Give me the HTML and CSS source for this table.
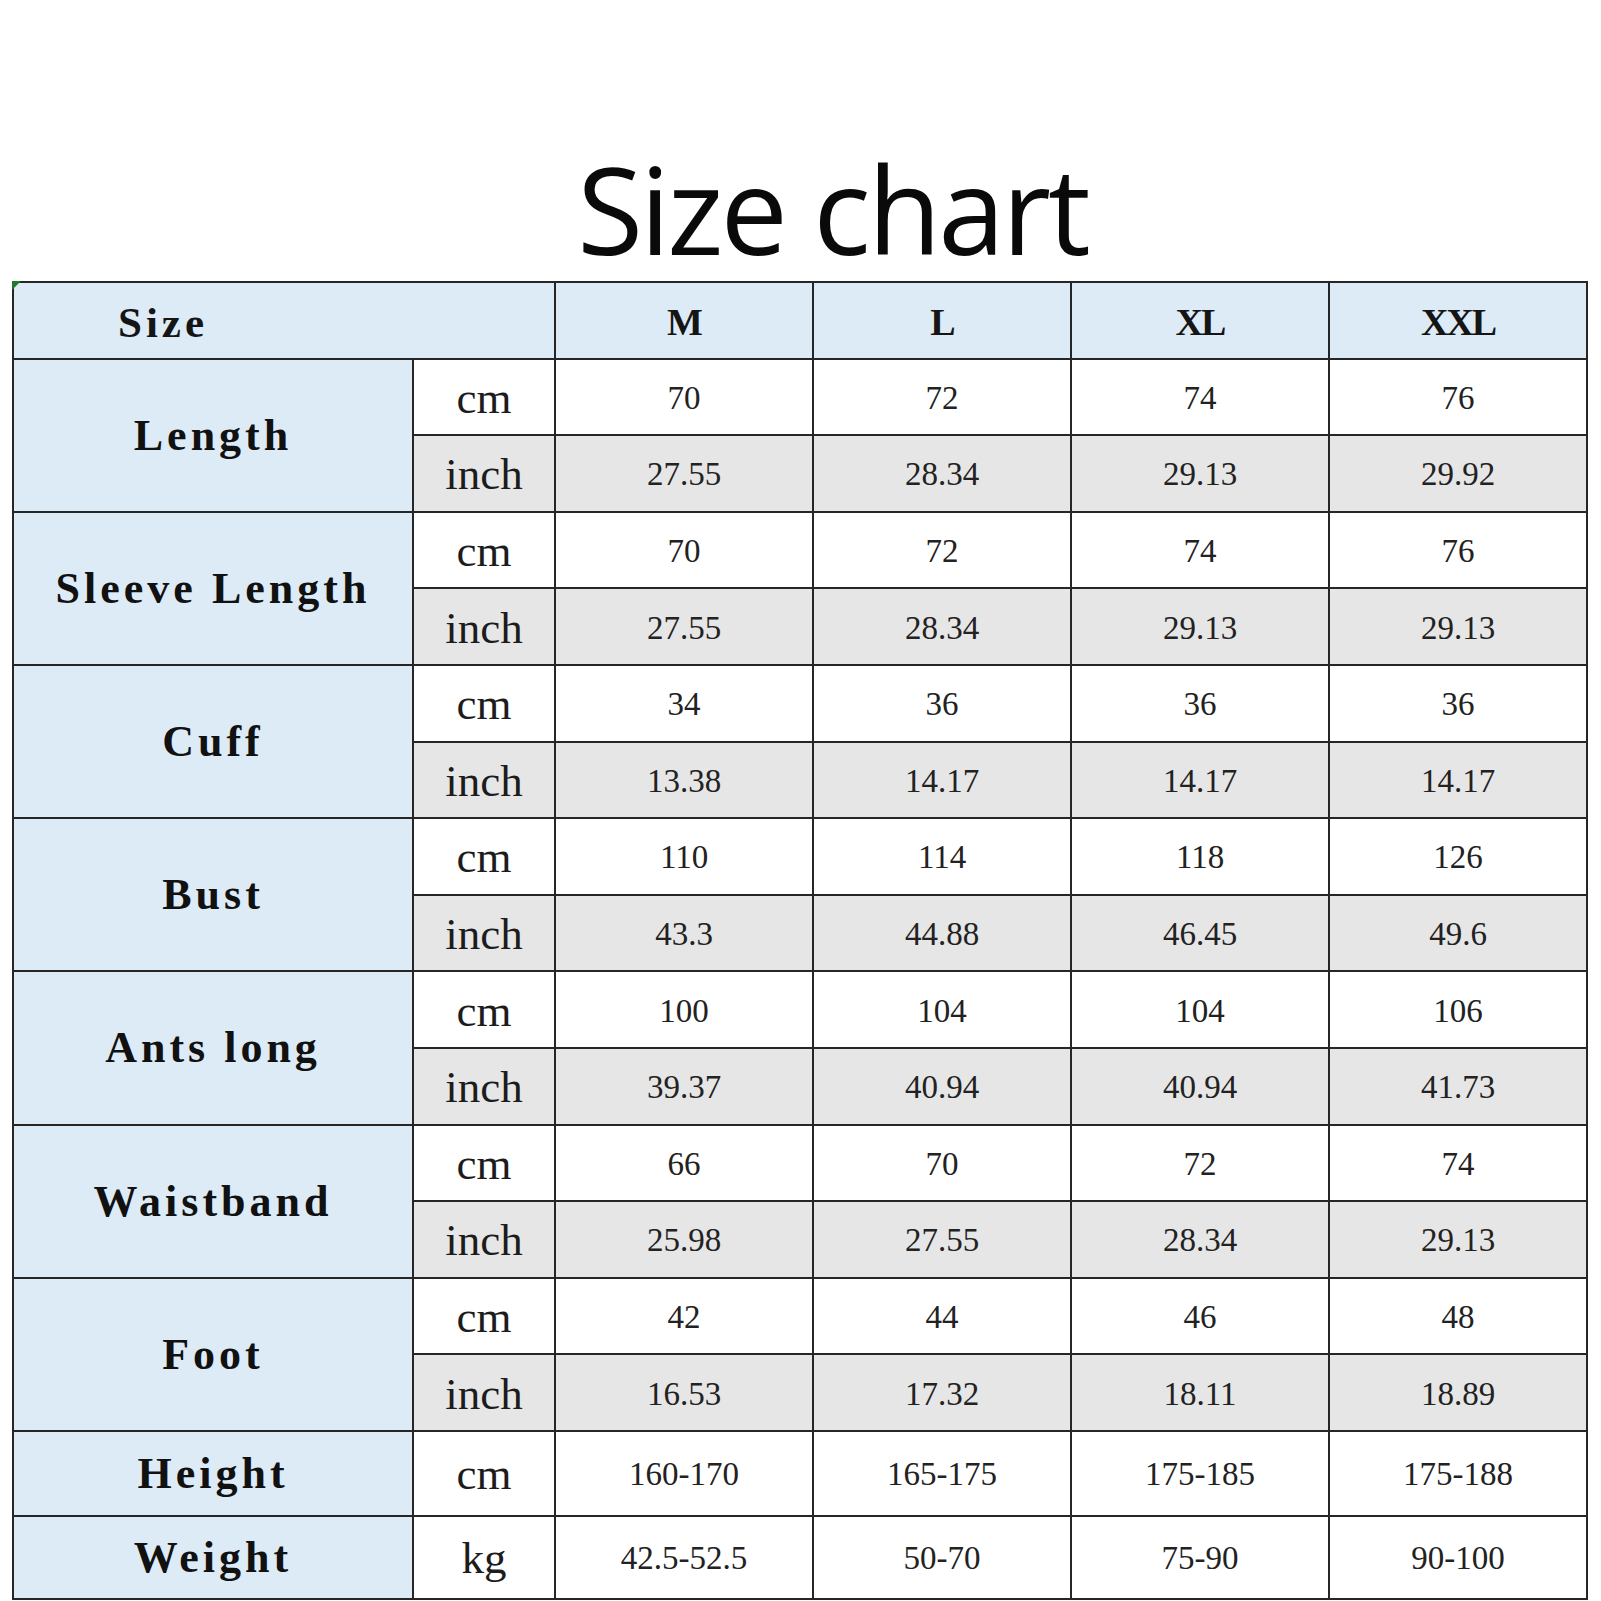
FILE: index.html
```html
<!DOCTYPE html>
<html lang="en">
<head>
<meta charset="utf-8">
<title>Size chart</title>
<link rel="stylesheet" href="styles.css">
</head>
<body>
<div class="page">
  <h1 class="title">Size chart</h1>
  <div class="chart">
    <span class="marker"></span>
    <table class="sizes">
      <colgroup>
        <col class="c-label"><col class="c-unit"><col class="c-val"><col class="c-val"><col class="c-val"><col class="c-val">
      </colgroup>
      <thead>
        <tr class="row head">
          <th colspan="2" class="size-head">Size</th>
          <th>M</th><th>L</th><th>XL</th><th>XXL</th>
        </tr>
      </thead>
      <tbody>
        <tr class="row"><th rowspan="2" class="label">Length</th><td class="unit">cm</td><td>70</td><td>72</td><td>74</td><td>76</td></tr>
        <tr class="row alt"><td class="unit">inch</td><td>27.55</td><td>28.34</td><td>29.13</td><td>29.92</td></tr>
        <tr class="row"><th rowspan="2" class="label">Sleeve Length</th><td class="unit">cm</td><td>70</td><td>72</td><td>74</td><td>76</td></tr>
        <tr class="row alt"><td class="unit">inch</td><td>27.55</td><td>28.34</td><td>29.13</td><td>29.13</td></tr>
        <tr class="row"><th rowspan="2" class="label">Cuff</th><td class="unit">cm</td><td>34</td><td>36</td><td>36</td><td>36</td></tr>
        <tr class="row alt"><td class="unit">inch</td><td>13.38</td><td>14.17</td><td>14.17</td><td>14.17</td></tr>
        <tr class="row"><th rowspan="2" class="label">Bust</th><td class="unit">cm</td><td>110</td><td>114</td><td>118</td><td>126</td></tr>
        <tr class="row alt"><td class="unit">inch</td><td>43.3</td><td>44.88</td><td>46.45</td><td>49.6</td></tr>
        <tr class="row"><th rowspan="2" class="label">Ants long</th><td class="unit">cm</td><td>100</td><td>104</td><td>104</td><td>106</td></tr>
        <tr class="row alt"><td class="unit">inch</td><td>39.37</td><td>40.94</td><td>40.94</td><td>41.73</td></tr>
        <tr class="row"><th rowspan="2" class="label">Waistband</th><td class="unit">cm</td><td>66</td><td>70</td><td>72</td><td>74</td></tr>
        <tr class="row alt"><td class="unit">inch</td><td>25.98</td><td>27.55</td><td>28.34</td><td>29.13</td></tr>
        <tr class="row"><th rowspan="2" class="label">Foot</th><td class="unit">cm</td><td>42</td><td>44</td><td>46</td><td>48</td></tr>
        <tr class="row alt"><td class="unit">inch</td><td>16.53</td><td>17.32</td><td>18.11</td><td>18.89</td></tr>
        <tr class="row tall-a"><th class="label">Height</th><td class="unit">cm</td><td>160-170</td><td>165-175</td><td>175-185</td><td>175-188</td></tr>
        <tr class="row tall-b"><th class="label">Weight</th><td class="unit">kg</td><td>42.5-52.5</td><td>50-70</td><td>75-90</td><td>90-100</td></tr>
      </tbody>
    </table>
  </div>
</div>
</body>
</html>
```

FILE: styles.css
```css
html, body {
  margin: 0;
  padding: 0;
  background: #ffffff;
}

.page {
  width: 1601px;
  height: 1601px;
  overflow: hidden;
}

.title {
  margin: 0;
  padding: 148px 0 0 64px;
  height: 122px;
  line-height: 122px;
  font-family: "Open Sans", "Noto Sans", sans-serif;
  font-weight: 400;
  font-size: 120px;
  letter-spacing: -3px;
  text-align: center;
  color: #0a0a0a;
}

.chart {
  position: relative;
  margin: 11px 0 0 12px;
  width: 1576px;
}

.marker {
  position: absolute;
  left: 0;
  top: 0;
  width: 0;
  height: 0;
  border-top: 9px solid #1f7a2a;
  border-right: 9px solid transparent;
  z-index: 2;
}

.sizes {
  border-collapse: collapse;
  table-layout: fixed;
  width: 1576px;
  font-family: "Liberation Serif", "Times New Roman", serif;
  color: #222222;
}

.c-label { width: 400px; }
.c-unit { width: 142px; }
.c-val { width: 258px; }

.sizes th,
.sizes td {
  border: 2px solid #262626;
  padding: 0;
  text-align: center;
  vertical-align: middle;
}

.row { height: 76.6px; }
.tall-a { height: 85px; }
.tall-b { height: 83px; }

.head th {
  background: #ddebf7;
  font-weight: 700;
  font-size: 38px;
  letter-spacing: -2px;
  color: #151515;
  padding-top: 4px;
}

.head th.size-head {
  text-align: left;
  padding-left: 104px;
  font-size: 43px;
  letter-spacing: 4px;
}

.label {
  background: #ddebf7;
  font-weight: 700;
  font-size: 44px;
  letter-spacing: 4px;
  color: #111111;
}

.sizes td {
  font-size: 33px;
  background: #ffffff;
  padding-top: 3px;
}

.sizes td.unit {
  font-size: 45px;
  color: #1c1c1c;
  padding-top: 2px;
}

.alt td {
  background: #e7e6e6;
}
```
